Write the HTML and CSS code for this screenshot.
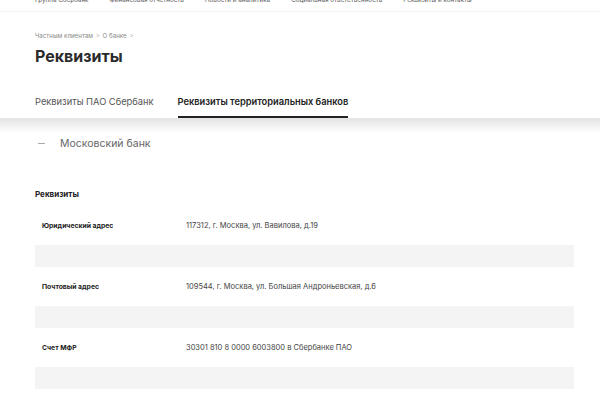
FILE: index.html
```html
<!DOCTYPE html>
<html lang="ru">
<head>
<meta charset="utf-8">
<title>Реквизиты</title>
<link rel="stylesheet" href="styles.css">
</head>
<body>
<nav class="topnav">
  <div class="topnav-inner">
    <span class="topnav-item">Группа Сбербанк</span>
    <span class="topnav-item">Финансовая отчетность</span>
    <span class="topnav-item">Новости и аналитика</span>
    <span class="topnav-item">Социальная ответственность</span>
    <span class="topnav-item">Реквизиты и контакты</span>
  </div>
</nav>
<header class="page-head">
  <div class="breadcrumb">Частным клиентам <span class="sep">&gt;</span> О банке <span class="sep">&gt;</span></div>
  <h1 class="title">Реквизиты</h1>
  <div class="tabs">
    <span class="tab">Реквизиты ПАО Сбербанк</span>
    <span class="tab tab-active">Реквизиты территориальных банков</span>
  </div>
</header>
<div class="shadow"></div>
<main class="content">
  <div class="acc-head"><span class="acc-dash"></span><span class="acc-title">Московский банк</span></div>
  <h2 class="section-title">Реквизиты</h2>
  <div class="table">
    <div class="row"><span class="label">Юридический адрес</span><span class="value">117312, г. Москва, ул. Вавилова, д.19</span></div>
    <div class="row-gap"></div>
    <div class="row"><span class="label">Почтовый адрес</span><span class="value">109544, г. Москва, ул. Большая Андроньевская, д.6</span></div>
    <div class="row-gap"></div>
    <div class="row"><span class="label">Счет МФР</span><span class="value">30301 810 8 0000 6003800 в Сбербанке ПАО</span></div>
    <div class="row-gap"></div>
  </div>
</main>
</body>
</html>
```
FILE: styles.css
```css
* { box-sizing: border-box; }
html, body { margin: 0; padding: 0; background: #fff; }
body {
  font-family: "Inter", "Roboto", "Liberation Sans", sans-serif;
  color: #333;
  width: 600px;
  height: 400px;
  overflow: hidden;
}
.topnav {
  height: 12px;
  border-bottom: 1px solid #f2f2f2;
  overflow: hidden;
}
.topnav-inner {
  display: flex;
  gap: 21px;
  padding-left: 35px;
  margin-top: -4px;
  font-size: 6.3px;
  line-height: 9px;
  color: #555;
}
.page-head {
  padding-left: 35px;
}
.breadcrumb {
  margin-top: 19px;
  font-size: 6.2px;
  line-height: 9px;
  color: #888;
}
.breadcrumb .sep { color: #aaa; padding: 0 1px; }
.title {
  margin: 5px 0 0;
  font-size: 16px;
  line-height: 22px;
  font-weight: 700;
  color: #2b2b2b;
}
.tabs {
  display: flex;
  gap: 24px;
  margin-top: 28px;
}
.tab {
  font-size: 9.3px;
  line-height: 14px;
  color: #555;
  padding-bottom: 7px;
  border-bottom: 2px solid transparent;
}
.tab-active {
  font-weight: 600;
  color: #222;
  border-bottom-color: #222;
}
.shadow {
  height: 15px;
  background: linear-gradient(#e3e3e3, #f7f7f7 70%, #fff);
}
.content {
  padding: 0 26px 0 35px;
}
.acc-head {
  display: flex;
  align-items: center;
  margin-top: 0;
  height: 20px;
}
.acc-dash {
  width: 7px;
  height: 1px;
  background: #aaa;
  margin-left: 3px;
  margin-right: 15px;
}
.acc-title {
  font-size: 10.5px;
  color: #666;
}
.section-title {
  margin: 36px 0 0;
  font-size: 8px;
  line-height: 10px;
  font-weight: 700;
  color: #222;
}
.table {
  margin-top: 7px;
}
.row {
  display: grid;
  grid-template-columns: 144px 1fr;
  align-items: center;
  height: 39px;
  padding-left: 7px;
}
.label { font-size: 6.8px; font-weight: 700; color: #222; }
.value { font-size: 7.5px; color: #444; }
.row-gap {
  height: 22px;
  background: #f4f4f4;
}
```
